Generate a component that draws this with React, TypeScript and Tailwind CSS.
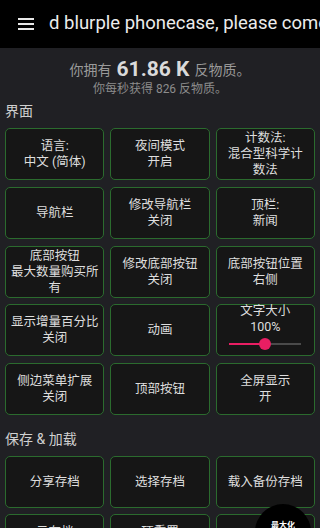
import React from "react";

const font = { fontFamily: 'Roboto, "Noto Sans CJK SC", "Noto Sans", sans-serif' };

function Btn({ lines, children }: { lines?: string[]; children?: React.ReactNode }) {
  return (
    <div className="h-[52px] rounded-[5px] border-[1.5px] border-[#2b6b2e] bg-[#161616] flex flex-col items-center justify-center text-center text-[12.5px] leading-[16px] text-[#dedede] whitespace-nowrap">
      {lines?.map((l, i) => (
        <div key={i}>{l}</div>
      ))}
      {children}
    </div>
  );
}

export default function App() {
  return (
    <div className="relative w-[320px] h-[528px] overflow-hidden bg-[#202024]" style={font}>
      <div className="h-[48px] bg-black flex items-center overflow-hidden">
        <div className="w-[50px] shrink-0 flex justify-center pl-[1px]">
          <div className="flex flex-col gap-[3px] w-[16px]">
            <div className="h-[2px] bg-[#e8e8e8]" />
            <div className="h-[2px] bg-[#e8e8e8]" />
            <div className="h-[2px] bg-[#e8e8e8]" />
          </div>
        </div>
        <div className="whitespace-nowrap text-[18.5px] text-[#ececec] -ml-[1px]">
          d blurple phonecase, please come
        </div>
      </div>

      <div className="pt-[10px] text-center">
        <div className="h-[24px] flex items-center justify-center text-[14px] text-[#9a9a9a]">
          你拥有<span className="mx-[5px] text-[21px] font-bold text-[#dadada]">61.86 K</span>反物质。
        </div>
        <div className="h-[15px] text-[12px] leading-[15px] text-[#8c8c8c]">你每秒获得 826 反物质。</div>
      </div>

      <div className="px-[5px] pb-[3px] h-[31px] flex items-center text-[14px] text-[#d0d0d0]">界面</div>

      <div className="grid grid-cols-3 gap-x-[6px] gap-y-[6.75px] px-[5px]">
        <Btn lines={["语言:", "中文 (简体)"]} />
        <Btn lines={["夜间模式", "开启"]} />
        <Btn lines={["计数法:", "混合型科学计", "数法"]} />
        <Btn lines={["导航栏"]} />
        <Btn lines={["修改导航栏", "关闭"]} />
        <Btn lines={["顶栏:", "新闻"]} />
        <Btn lines={["底部按钮", "最大数量购买所", "有"]} />
        <Btn lines={["修改底部按钮", "关闭"]} />
        <Btn lines={["底部按钮位置", "右侧"]} />
        <Btn lines={["显示增量百分比", "关闭"]} />
        <Btn lines={["动画"]} />
        <Btn>
          <div className="-mt-[8px]">文字大小</div>
          <div>100%</div>
          <div className="relative w-[72px] h-[12px] mt-[3px]">
            <div className="absolute left-0 top-[5px] h-[2px] w-[36px] bg-[#e91e63]" />
            <div className="absolute left-[36px] top-[5px] h-[2px] w-[36px] bg-[#4a4a4a]" />
            <div className="absolute left-[30px] top-0 w-[12px] h-[12px] rounded-full bg-[#e91e63]" />
          </div>
        </Btn>
        <Btn lines={["侧边菜单扩展", "关闭"]} />
        <Btn lines={["顶部按钮"]} />
        <Btn lines={["全屏显示", "开"]} />
      </div>

      <div className="px-[5px] pt-[14px] pb-[7px] h-[41px] flex items-center text-[14px] text-[#d0d0d0]">保存 &amp; 加载</div>

      <div className="grid grid-cols-3 gap-x-[6px] gap-y-[6px] px-[5px]">
        <Btn lines={["分享存档"]} />
        <Btn lines={["选择存档"]} />
        <Btn lines={["载入备份存档"]} />
        <Btn lines={["云存档", "关闭"]} />
        <Btn lines={["硬重置", "存档"]} />
        <Btn lines={[""]} />
      </div>

      <div className="absolute left-[255px] top-[504px] w-[56px] h-[56px] rounded-full bg-black flex justify-center">
        <div className="mt-[17px] text-[8px] font-bold text-white leading-[10px]">最大化</div>
      </div>
    </div>
  );
}
